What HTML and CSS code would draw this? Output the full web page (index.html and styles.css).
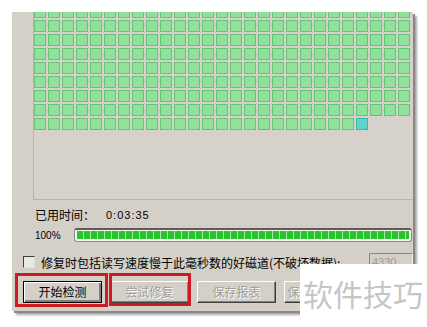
FILE: index.html
```html
<!DOCTYPE html>
<html>
<head>
<meta charset="utf-8">
<link rel="stylesheet" href="styles.css">
</head>
<body>
<div class="window">
  <div class="panel">
    <div class="grid" id="grid"></div>
  </div>
  <div class="status">
    <div class="time-row"><span class="label">已用时间：</span><span class="time">0:03:35</span></div>
    <div class="progress-row"><span class="pct">100%</span><div class="bar"><div class="fill"></div></div></div>
  </div>
  <div class="check-row">
    <span class="checkbox"></span>
    <span class="check-text">修复时包括读写速度慢于此毫秒数的好磁道(不破坏数据):</span>
    <span class="input">4330</span>
  </div>
  <div class="buttons">
    <button class="btn default">开始检测</button>
    <button class="btn disabled">尝试修复</button>
    <button class="btn disabled">保存报表</button>
    <button class="btn disabled">保存检测状态</button>
  </div>
</div>
<div class="mark mark1"></div>
<div class="mark mark2"></div>
<div class="watermark">软件技巧</div>
<script src="script.js"></script>
</body>
</html>
```
FILE: styles.css
```css
html, body {
  margin: 0;
  padding: 0;
}
body {
  width: 427px;
  height: 327px;
  background: #ffffff;
  position: relative;
  overflow: hidden;
  font-family: "Noto Sans CJK SC", "Liberation Sans", sans-serif;
  font-size: 12px;
  color: #000;
}
.window {
  margin: 12px 0 0 12px;
  width: 401px;
  height: 299px;
  background: #d4d0c8;
  box-shadow: 2px 2px 0 #8a8884, 4px 4px 2px rgba(0,0,0,0.35);
  display: flex;
  flex-direction: column;
  overflow: hidden;
}
.panel {
  margin-left: 21px;
  height: 187px;
  border-left: 1px solid #b8b4ac;
  border-bottom: 1px solid #b8b4ac;
  background: #d6d2cb;
  overflow: hidden;
}
.grid {
  margin-top: -6px;
  display: grid;
  grid-template-columns: repeat(27, 12px);
  grid-auto-rows: 12px;
  gap: 2px;
}
.cell {
  box-sizing: border-box;
  border: 1px solid #68c477;
  background: #8fe29b;
}
.cell.cur {
  border-color: #3fb4a8;
  background: #5fd4c8;
}
.status {
  padding: 0 1px 0 23px;
}
.time-row {
  margin-top: 8px;
  height: 14px;
  line-height: 14px;
  display: flex;
  align-items: center;
}
.label {
  width: 71px;
}
.time {
  font-family: "Liberation Sans", sans-serif;
  font-size: 11px;
  letter-spacing: 1px;
}
.progress-row {
  margin-top: 6px;
  height: 14px;
  display: flex;
  align-items: center;
}
.pct {
  width: 39px;
  font-family: "Liberation Sans", sans-serif;
  font-size: 10px;
}
.bar {
  flex: 1;
  height: 14px;
  box-sizing: border-box;
  border: 1px solid #8c8a84;
  border-top: 2px solid #5e5c58;
  border-radius: 3px;
  background: #f4f4f0;
  padding: 1px 2px 2px 2px;
}
.fill {
  height: 100%;
  background: repeating-linear-gradient(90deg, #2cc22c 0 6px, #a8e8a8 6px 7px);
}
.check-row {
  margin-top: 11px;
  height: 18px;
  display: flex;
  align-items: center;
  padding-left: 11px;
}
.checkbox {
  width: 12px;
  height: 12px;
  box-sizing: border-box;
  border: 1px solid #404040;
  border-right-color: #e0e0e0;
  border-bottom-color: #e0e0e0;
  background: #e6ece0;
  margin-right: 6px;
}
.check-text {
  width: 328px;
  white-space: nowrap;
}
.input {
  width: 44px;
  height: 18px;
  box-sizing: border-box;
  border: 1px solid #8a8680;
  border-right-color: #f0f0f0;
  border-bottom-color: #f0f0f0;
  font-family: "Liberation Sans", sans-serif;
  font-size: 11px;
  color: #9a9a9a;
  line-height: 16px;
  padding-left: 2px;
}
.buttons {
  margin-top: 10px;
  padding-left: 11px;
  display: flex;
  gap: 8px;
}
.btn {
  flex: none;
  width: 79px;
  height: 22px;
  box-sizing: border-box;
  background: #d4d0c8;
  border: 1px solid;
  border-color: #ffffff #404040 #404040 #ffffff;
  box-shadow: inset -1px -1px 0 #808080;
  font-family: "Noto Sans CJK SC", sans-serif;
  font-size: 12px;
  line-height: 18px;
  padding: 0;
  color: #000;
  white-space: nowrap;
  overflow: hidden;
}
.btn.default {
  border: 1px solid #000;
  box-shadow: inset 1px 1px 0 #ffffff, inset -2px -2px 0 #808080;
}
.btn.disabled {
  color: #a09c96;
  text-shadow: 1px 1px 0 #ffffff;
}
.mark {
  position: absolute;
  box-sizing: border-box;
  border: 3px solid #cc1c22;
}
.mark1 {
  left: 15px;
  top: 273px;
  width: 93px;
  height: 34px;
}
.mark2 {
  left: 109px;
  top: 273px;
  width: 82px;
  height: 33px;
}
.watermark {
  position: absolute;
  left: 300px;
  top: 264px;
  width: 127px;
  height: 63px;
  background: #ffffff;
  box-sizing: border-box;
  padding: 13px 0 0 3px;
  font-family: "Noto Sans CJK SC", sans-serif;
  font-size: 30px;
  line-height: 32px;
  color: #c6c6c6;
  white-space: nowrap;
}
```
FILE: script.js
```js
var grid = document.getElementById('grid');
var total = 8 * 27 + 24;
for (var i = 0; i < total; i++) {
  var c = document.createElement('div');
  c.className = i === total - 1 ? 'cell cur' : 'cell';
  grid.appendChild(c);
}
```
